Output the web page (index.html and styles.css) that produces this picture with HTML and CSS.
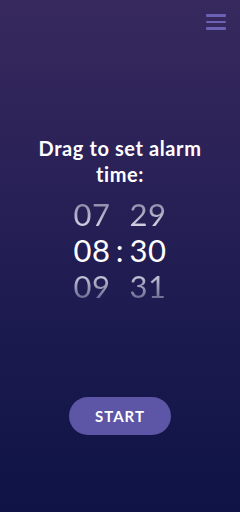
FILE: index.html
```html
<!DOCTYPE html>
<html>
<head>
<meta charset="utf-8">
<link rel="stylesheet" href="styles.css">
</head>
<body>
<div class="screen">
  <header class="topbar">
    <button class="menu" aria-label="Menu">
      <span class="bar"></span><span class="bar"></span><span class="bar"></span>
    </button>
  </header>
  <main class="content">
    <h1 class="title">Drag to set alarm time:</h1>
    <div class="picker">
      <div class="row faded top"><span class="num">07</span><span class="sep"> </span><span class="num">29</span></div>
      <div class="row current"><span class="num">08</span><span class="sep">:</span><span class="num">30</span></div>
      <div class="row faded bottom"><span class="num">09</span><span class="sep"> </span><span class="num">31</span></div>
    </div>
  </main>
  <footer class="actions">
    <button class="start">START</button>
  </footer>
</div>
</body>
</html>
```
FILE: styles.css
```css
* { box-sizing: border-box; }
html, body { margin: 0; padding: 0; }
body {
  width: 240px;
  height: 512px;
  overflow: hidden;
  font-family: Lato, "Noto Sans", sans-serif;
}
.screen {
  height: 512px;
  display: flex;
  flex-direction: column;
  background: linear-gradient(180deg, #37295d 0%, #2b2258 30%, #1b1a4f 65%, #0f1346 100%);
  color: #fff;
}
.topbar {
  display: flex;
  justify-content: flex-end;
  padding: 14px 14px 0 0;
}
.menu {
  background: none;
  border: 0;
  padding: 0;
  display: flex;
  flex-direction: column;
  gap: 4px;
  width: 20px;
}
.bar {
  display: block;
  height: 2.5px;
  width: 20px;
  background: #6c61b4;
  border-radius: 1px;
}
.content {
  display: flex;
  flex-direction: column;
  align-items: center;
  padding-top: 105px;
}
.title {
  margin: 0;
  width: 200px;
  text-align: center;
  font-size: 20px;
  font-weight: 700;
  line-height: 26px;
  letter-spacing: 0.6px;
}
.picker {
  margin-top: 9px;
  display: flex;
  flex-direction: column;
  align-items: center;
}
.row {
  font-size: 31px;
  line-height: 36px;
  font-weight: 400;
  display: flex;
  letter-spacing: 0.5px;
}
.sep {
  display: inline-block;
  width: 19px;
  text-align: center;
}
.faded .num {
  background: linear-gradient(180deg, #8a87a6 15%, #d4d2e2 85%);
  -webkit-background-clip: text;
  background-clip: text;
  color: transparent;
}
.faded.bottom .num {
  background: linear-gradient(180deg, #d0cee0 15%, #6e6b94 85%);
  -webkit-background-clip: text;
  background-clip: text;
}
.actions {
  display: flex;
  justify-content: center;
  margin-top: 93px;
}
.start {
  width: 102px;
  height: 38px;
  border: 0;
  border-radius: 19px;
  background: #5d55a5;
  color: #fff;
  font-family: Lato, "Noto Sans", sans-serif;
  font-size: 15px;
  font-weight: 700;
  letter-spacing: 1px;
}
```
